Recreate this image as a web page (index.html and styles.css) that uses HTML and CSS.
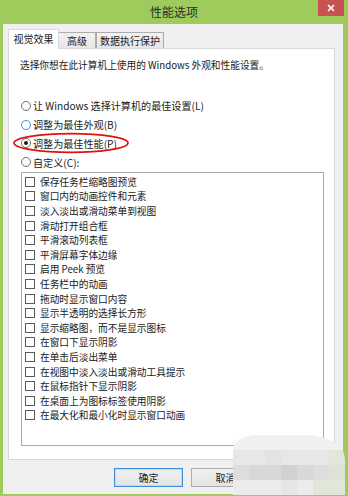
FILE: index.html
```html
<!DOCTYPE html>
<html lang="zh-CN">
<head>
<meta charset="utf-8">
<title>性能选项</title>
<link rel="stylesheet" href="styles.css">
</head>
<body>
<div class="window">
  <div class="titlebar">
    <span></span>
    <span class="title">性能选项</span>
    <div class="close"><svg width="8" height="8" viewBox="0 0 8 8"><path d="M1 1 L7 7 M7 1 L1 7" stroke="#fff" stroke-width="1.6"/></svg></div>
  </div>
  <div class="client">
    <div class="tabs">
      <div class="tab active">视觉效果</div>
      <div class="tab t2">高级</div>
      <div class="tab t3">数据执行保护</div>
    </div>
    <div class="page">
      <p class="desc">选择你想在此计算机上使用的 Windows 外观和性能设置。</p>
      <div class="radios">
        <div class="radio"><span class="rb"></span>让 Windows 选择计算机的最佳设置(L)</div>
        <div class="radio"><span class="rb hover"></span>调整为最佳外观(B)</div>
        <div class="radio"><span class="rb checked"></span>调整为最佳性能(P)</div>
        <div class="radio"><span class="rb"></span>自定义(C):</div>
      </div>
      <div class="list">
        <div class="item"><span class="cb"></span>保存任务栏缩略图预览</div>
        <div class="item"><span class="cb"></span>窗口内的动画控件和元素</div>
        <div class="item"><span class="cb"></span>淡入淡出或滑动菜单到视图</div>
        <div class="item"><span class="cb"></span>滑动打开组合框</div>
        <div class="item"><span class="cb"></span>平滑滚动列表框</div>
        <div class="item"><span class="cb"></span>平滑屏幕字体边缘</div>
        <div class="item"><span class="cb"></span>启用 Peek 预览</div>
        <div class="item"><span class="cb"></span>任务栏中的动画</div>
        <div class="item"><span class="cb"></span>拖动时显示窗口内容</div>
        <div class="item"><span class="cb"></span>显示半透明的选择长方形</div>
        <div class="item"><span class="cb"></span>显示缩略图，而不是显示图标</div>
        <div class="item"><span class="cb"></span>在窗口下显示阴影</div>
        <div class="item"><span class="cb"></span>在单击后淡出菜单</div>
        <div class="item"><span class="cb"></span>在视图中淡入淡出或滑动工具提示</div>
        <div class="item"><span class="cb"></span>在鼠标指针下显示阴影</div>
        <div class="item"><span class="cb"></span>在桌面上为图标标签使用阴影</div>
        <div class="item"><span class="cb"></span>在最大化和最小化时显示窗口动画</div>
      </div>
    </div>
    <div class="buttons">
      <button class="btn default">确定</button>
      <button class="btn">取消</button>
    </div>
  </div>
  <svg class="mark" width="120" height="22" viewBox="0 0 120 22"><ellipse cx="59" cy="11" rx="57" ry="9.3" fill="none" stroke="#e41010" stroke-width="1.7"/></svg>
  <div class="blur">
    <span class="c1"></span><span class="c1"></span><span class="c1"></span><span class="c1"></span><span class="c1"></span><span class="c1"></span><span class="c1"></span>
    <span class="c2"></span><span class="c2"></span><span class="c3"></span><span class="c2"></span><span class="c2"></span><span class="c2"></span><span class="g2"></span>
    <span class="c4"></span><span class="c5"></span><span class="c5"></span><span class="c6"></span><span class="c5"></span><span class="c4"></span><span class="g3"></span>
    <span class="c7"></span><span class="c7"></span><span class="c7"></span><span class="c8"></span><span class="c7"></span><span class="g4"></span><span class="g4"></span>
  </div>
</div>
</body>
</html>
```
FILE: styles.css
```css
* { box-sizing: border-box; }
html, body { margin: 0; padding: 0; }
body {
  width: 348px;
  height: 496px;
  overflow: hidden;
  background: #9ecb5b;
  font-family: "Noto Sans CJK SC", "Noto Sans", sans-serif;
  color: #1a1a1a;
}
.window {
  position: relative;
  width: 348px;
  height: 496px;
}
.titlebar {
  height: 24px;
  display: grid;
  grid-template-columns: 1fr auto 1fr;
  align-items: start;
}
.title {
  line-height: 24px;
  font-size: 12px;
  color: #2b2b2b;
}
.close {
  justify-self: end;
  width: 26px;
  height: 16px;
  margin-right: 4px;
  background: #c85151;
  display: flex;
  align-items: center;
  justify-content: center;
}
.client {
  margin: 0 5px 0 3px;
  height: 470px;
  background: #f0f0f0;
  padding: 5px 8px 0 5px;
}
.tabs {
  display: flex;
  align-items: flex-end;
  height: 19px;
  position: relative;
  z-index: 2;
}
.tab {
  font-size: 10px;
  line-height: 15px;
  height: 16px;
  text-align: center;
  border: 1px solid #acacac;
  border-bottom: none;
  background: linear-gradient(#f2f2f2, #e6e6e6);
  color: #1a1a1a;
}
.tab.active {
  width: 51px;
  height: 20px;
  margin-bottom: -1px;
  line-height: 17px;
  background: #fff;
  border-color: #d9d9d9;
}
.t2 { width: 37px; border-left: none; }
.t3 { width: 68px; }
.page {
  height: 412px;
  border: 1px solid #d9d9d9;
  background: #fff;
  padding: 9px 0 0 12px;
}
.desc {
  margin: 0 0 0 -1px;
  font-size: 9.7px;
  line-height: 14px;
}
.radios {
  margin-top: 24.6px;
}
.radio {
  height: 18.7px;
  display: flex;
  align-items: center;
  font-size: 10.1px;
  gap: 2px;
}
.rb {
  width: 10px;
  height: 10px;
  border-radius: 50%;
  border: 1px solid #6e6e6e;
  background: #fff;
  position: relative;
  flex: none;
}
.rb.hover { border-color: #3c8fd8; }
.rb.checked::after {
  content: "";
  position: absolute;
  left: 2px; top: 2px;
  width: 4px; height: 4px;
  border-radius: 50%;
  background: #1a1a1a;
}
.list {
  margin-top: 0.5px;
  width: 303px;
  height: 274px;
  border: 1px solid #a9abb0;
  background: #fff;
  padding: 1.7px 0 0 3px;
}
.item {
  height: 14.6px;
  display: flex;
  align-items: center;
  font-size: 9.7px;
  gap: 5px;
  white-space: nowrap;
}
.cb {
  width: 10px;
  height: 10px;
  border: 1px solid #5a5a5a;
  background: #fff;
  flex: none;
}
.buttons {
  display: flex;
  gap: 8px;
  margin-top: 8px;
  padding-left: 106px;
}
.btn {
  width: 69px;
  height: 19px;
  font-family: inherit;
  font-size: 10px;
  padding: 0;
  border: 1px solid #adadad;
  background: linear-gradient(#f0f0f0, #e4e4e4);
  color: #1a1a1a;
}
.btn.default {
  border-color: #3c8fd8;
  box-shadow: inset 0 0 0 1px #bcdcf6;
}
.mark {
  position: absolute;
  left: 12px;
  top: 132px;
}
.blur {
  position: absolute;
  left: 233px;
  top: 435px;
  width: 112px;
  height: 60px;
  display: grid;
  grid-template-columns: repeat(7, 16px);
  grid-template-rows: repeat(4, 15px);
  border-radius: 26px 40px 0 0 / 14px 24px 0 0;
  overflow: hidden;
}
.blur span { display: block; }
.c1 { background: #eff0ef; }
.c2 { background: #e7e7e7; }
.c3 { background: #e3e3e3; }
.c4 { background: #dddddd; }
.c5 { background: #d8d8d8; }
.c6 { background: #d1d1d1; }
.c7 { background: #ebebeb; }
.c8 { background: #e6e6e6; }
.g2 { background: #e2e7db; }
.g3 { background: #dde3d5; }
.g4 { background: #e1e7d8; }
```
